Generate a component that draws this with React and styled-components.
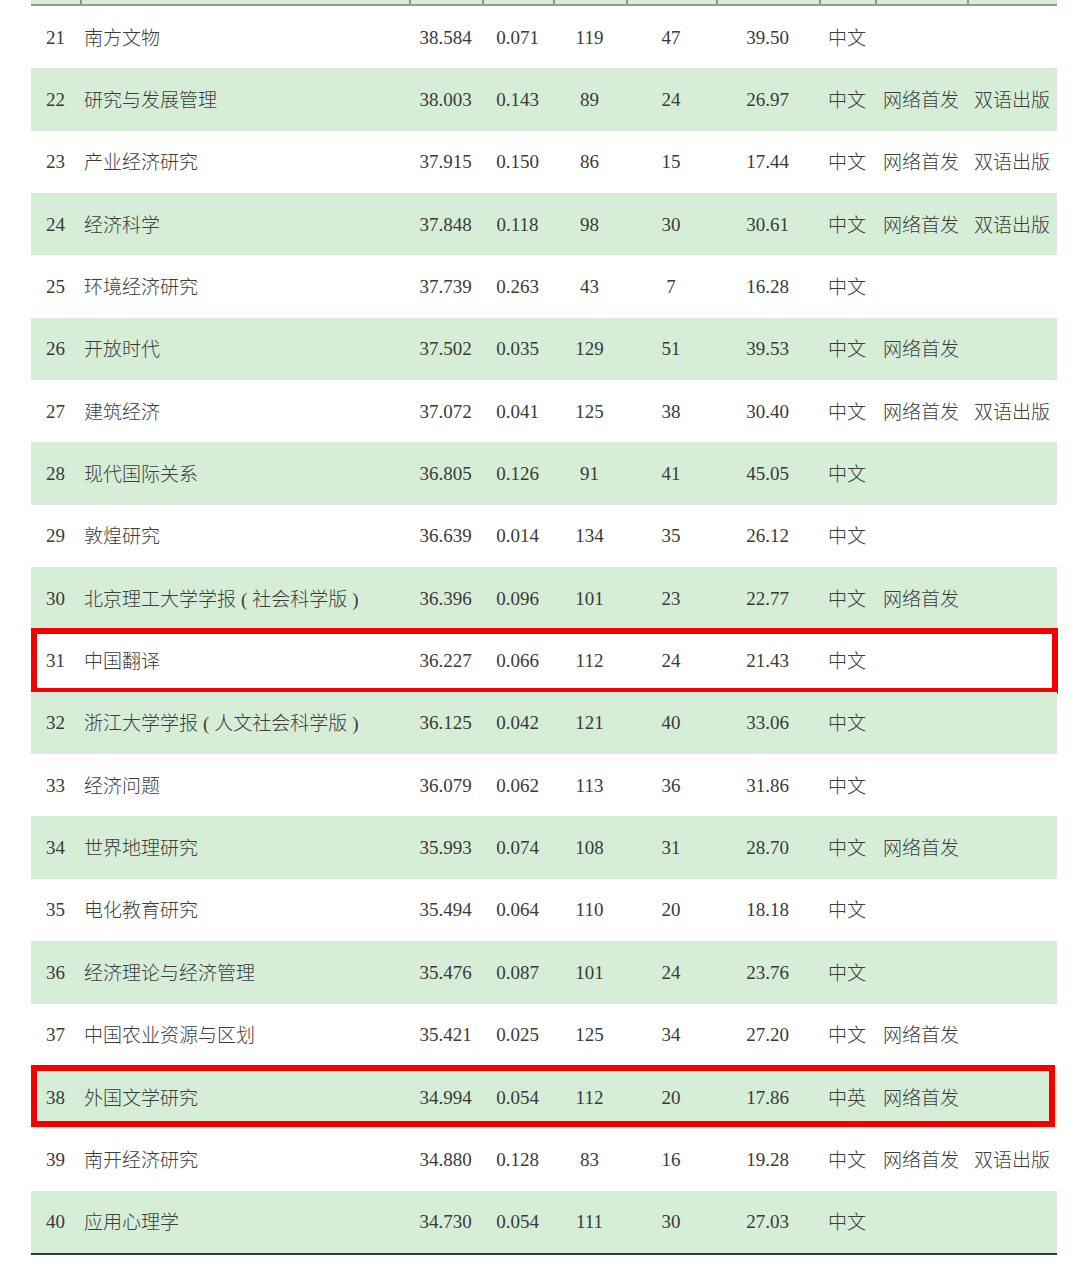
import React from 'react';
import styled, { createGlobalStyle } from 'styled-components';

const GlobalStyle = createGlobalStyle`
  html, body {
    margin: 0;
    padding: 0;
    background: #ffffff;
  }
  body {
    font-family: "Liberation Serif", "Noto Sans CJK SC", serif;
    color: #3a3a3a;
  }
`;

const COLS = '49px 329px 73px 71px 73px 90px 103px 56px 92px 90px';

const Page = styled.div`
  padding: 0 0 0 31px;
  width: 1026px;
`;

const Table = styled.div`
  display: flex;
  flex-direction: column;
  border-bottom: 2px solid #333633;
`;

const HeadTail = styled.div`
  display: grid;
  grid-template-columns: ${COLS};
  height: 4px;
  background: #d6eed7;
  border-bottom: 2px solid #969b96;
`;

const HeadCell = styled.div`
  border-left: ${(p) => (p.$first ? 'none' : '2px solid #8f948f')};
`;

const Row = styled.div`
  position: relative;
  display: grid;
  grid-template-columns: ${COLS};
  height: 62.35px;
  align-items: center;
  background: ${(p) => (p.$green ? '#d6eed7' : '#ffffff')};
`;

const Cell = styled.div`
  font-size: 19px;
  line-height: 1;
  text-align: ${(p) => (p.$left ? 'left' : 'center')};
  padding-left: ${(p) => (p.$left ? '4px' : '0')};
  white-space: nowrap;
`;

const Cjk = styled.span`
  font-family: "Noto Sans CJK SC", sans-serif;
  font-weight: 300;
  font-size: 19px;
  color: #3c3c3c;
`;

const Paren = styled.span`
  font-family: "Liberation Serif", serif;
  margin: 0 5px;
`;

const Mark = styled.div`
  position: absolute;
  left: 0;
  top: ${(p) => p.$top}px;
  bottom: ${(p) => p.$bottom}px;
  right: ${(p) => p.$right}px;
  border: 6px solid #f40000;
  pointer-events: none;
`;

const rows = [
  [21, '南方文物', '38.584', '0.071', '119', '47', '39.50', '中文', '', ''],
  [22, '研究与发展管理', '38.003', '0.143', '89', '24', '26.97', '中文', '网络首发', '双语出版'],
  [23, '产业经济研究', '37.915', '0.150', '86', '15', '17.44', '中文', '网络首发', '双语出版'],
  [24, '经济科学', '37.848', '0.118', '98', '30', '30.61', '中文', '网络首发', '双语出版'],
  [25, '环境经济研究', '37.739', '0.263', '43', '7', '16.28', '中文', '', ''],
  [26, '开放时代', '37.502', '0.035', '129', '51', '39.53', '中文', '网络首发', ''],
  [27, '建筑经济', '37.072', '0.041', '125', '38', '30.40', '中文', '网络首发', '双语出版'],
  [28, '现代国际关系', '36.805', '0.126', '91', '41', '45.05', '中文', '', ''],
  [29, '敦煌研究', '36.639', '0.014', '134', '35', '26.12', '中文', '', ''],
  [30, ['北京理工大学学报', '社会科学版'], '36.396', '0.096', '101', '23', '22.77', '中文', '网络首发', ''],
  [31, '中国翻译', '36.227', '0.066', '112', '24', '21.43', '中文', '', ''],
  [32, ['浙江大学学报', '人文社会科学版'], '36.125', '0.042', '121', '40', '33.06', '中文', '', ''],
  [33, '经济问题', '36.079', '0.062', '113', '36', '31.86', '中文', '', ''],
  [34, '世界地理研究', '35.993', '0.074', '108', '31', '28.70', '中文', '网络首发', ''],
  [35, '电化教育研究', '35.494', '0.064', '110', '20', '18.18', '中文', '', ''],
  [36, '经济理论与经济管理', '35.476', '0.087', '101', '24', '23.76', '中文', '', ''],
  [37, '中国农业资源与区划', '35.421', '0.025', '125', '34', '27.20', '中文', '网络首发', ''],
  [38, '外国文学研究', '34.994', '0.054', '112', '20', '17.86', '中英', '网络首发', ''],
  [39, '南开经济研究', '34.880', '0.128', '83', '16', '19.28', '中文', '网络首发', '双语出版'],
  [40, '应用心理学', '34.730', '0.054', '111', '30', '27.03', '中文', '', ''],
];

const marks = {
  31: { top: -1, bottom: -2, right: -1 },
  38: { top: -1, bottom: 1, right: 2 },
};

function Name({ value }) {
  if (Array.isArray(value)) {
    return (
      <>
        <Cjk>{value[0]}</Cjk>
        <Paren>(</Paren>
        <Cjk>{value[1]}</Cjk>
        <Paren>)</Paren>
      </>
    );
  }
  return <Cjk>{value}</Cjk>;
}

export default function App() {
  return (
    <Page>
      <GlobalStyle />
      <Table>
        <HeadTail>
          {Array.from({ length: 10 }).map((_, i) => (
            <HeadCell key={i} $first={i === 0} />
          ))}
        </HeadTail>
        {rows.map((r) => {
          const [no, name, a, b, c, d, e, lang, net, bi] = r;
          const mark = marks[no];
          return (
            <Row key={no} $green={no % 2 === 0}>
              <Cell>{no}</Cell>
              <Cell $left>
                <Name value={name} />
              </Cell>
              <Cell>{a}</Cell>
              <Cell>{b}</Cell>
              <Cell>{c}</Cell>
              <Cell>{d}</Cell>
              <Cell>{e}</Cell>
              <Cell><Cjk>{lang}</Cjk></Cell>
              <Cell><Cjk>{net}</Cjk></Cell>
              <Cell><Cjk>{bi}</Cjk></Cell>
              {mark && <Mark $top={mark.top} $bottom={mark.bottom} $right={mark.right} />}
            </Row>
          );
        })}
      </Table>
    </Page>
  );
}
